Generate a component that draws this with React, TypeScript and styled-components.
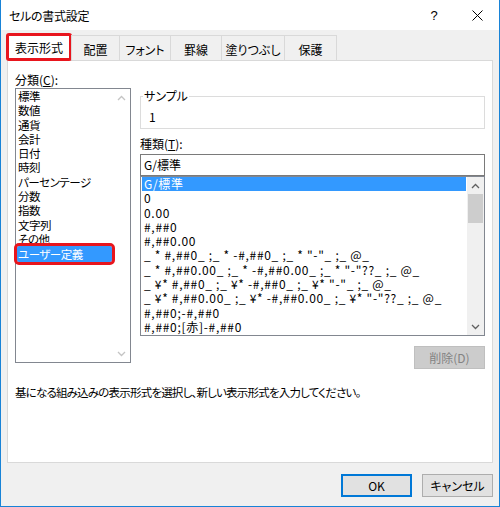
import styled, { createGlobalStyle } from 'styled-components';

const GlobalStyle = createGlobalStyle`
  html, body {
    margin: 0;
    padding: 0;
    background: #ffffff;
  }
  body {
    font-family: "Noto Sans CJK JP", "Noto Sans", sans-serif;
    font-size: 12px;
    color: #000000;
    font-feature-settings: "palt";
  }
`;

// Window frame
const Window = styled.div`
  width: 500px;
  height: 507px;
  box-sizing: border-box;
  border: 1px solid #1883d7;
  border-top: none;
  background: #f0f0f0;
  display: flex;
  flex-direction: column;
`;

const TitleBar = styled.div`
  height: 30px;
  flex: none;
  background: #ffffff;
  display: flex;
  align-items: center;
  padding-left: 8px;
`;

const Title = styled.span`
  font-size: 12px;
  letter-spacing: -0.3px;
  flex: 1;
`;

const CaptionButton = styled.div<{ $w: number }>`
  width: ${(p) => p.$w}px;
  height: 30px;
  display: flex;
  align-items: center;
  justify-content: center;
  font-size: 13px;
  font-family: "Liberation Sans", sans-serif;
`;

const Body = styled.div`
  flex: 1;
  padding: 3px 6px 0;
  display: flex;
  flex-direction: column;
`;

// Tabs
const TabStrip = styled.div`
  height: 28px;
  display: flex;
  position: relative;
  z-index: 1;
  margin-bottom: -1px;
`;

const Tab = styled.div<{ $w: number; $active?: boolean }>`
  width: ${(p) => p.$w}px;
  box-sizing: border-box;
  display: flex;
  align-items: center;
  justify-content: center;
  font-size: 12px;
  ${(p) =>
    p.$active
      ? `
    height: 28px;
    background: #ffffff;
    border: 3px solid #e8151d;
    border-radius: 3px;
    margin-left: -1px;
    padding-top: 1px;
  `
      : `
    height: 25px;
    margin-top: 2px;
    background: #f0f0f0;
    border: 1px solid #d9d9d9;
    border-bottom: none;
    margin-left: -1px;
    padding-top: 3px;
  `}
`;

const Panel = styled.div`
  height: 403px;
  flex: none;
  box-sizing: border-box;
  background: #ffffff;
  border: 1px solid #d9d9d9;
  padding: 11px 7px 0;
`;

const Columns = styled.div`
  display: flex;
  gap: 9px;
`;

const LeftCol = styled.div`
  width: 116px;
  display: flex;
  flex-direction: column;
`;

const RightCol = styled.div`
  flex: 1;
  padding-top: 16px;
  display: flex;
  flex-direction: column;
`;

const FieldLabel = styled.div<{ $gap?: number }>`
  line-height: 16px;
  margin-top: ${(p) => p.$gap ?? 0}px;
`;

// List boxes
const ListBox = styled.div<{ $h: number }>`
  height: ${(p) => p.$h}px;
  box-sizing: border-box;
  border: 1px solid #828790;
  display: flex;
  background: #ffffff;
`;

const ListItems = styled.div`
  flex: 1;
  padding: 0 1px;
  display: flex;
  flex-direction: column;
`;

const CategoryItem = styled.div<{ $selected?: boolean; $marked?: boolean }>`
  height: 14.3px;
  line-height: 14.3px;
  padding-left: 1px;
  font-size: 11.5px;
  letter-spacing: -0.5px;
  white-space: nowrap;
  background: ${(p) => (p.$selected ? '#3399ff' : 'transparent')};
  color: ${(p) => (p.$selected ? '#ffffff' : '#000000')};
  ${(p) =>
    p.$marked
      ? 'height: 16px; line-height: 16px; outline: 3px solid #e8151d; border-radius: 2px; position: relative;'
      : ''}
`;

const FormatItem = styled.div<{ $selected?: boolean }>`
  height: 14.3px;
  line-height: 14.3px;
  padding-left: 2px;
  white-space: pre;
  letter-spacing: 0.7px;
  background: ${(p) => (p.$selected ? '#3399ff' : 'transparent')};
  color: ${(p) => (p.$selected ? '#ffffff' : '#000000')};
`;

const ScrollBar = styled.div<{ $track: string }>`
  width: 17px;
  flex: none;
  background: ${(p) => p.$track};
  display: flex;
  flex-direction: column;
`;

const ArrowBox = styled.div`
  height: 17px;
  display: flex;
  align-items: center;
  justify-content: center;
`;

const Thumb = styled.div`
  height: 29px;
  margin: 0 1px;
  background: #cdcdcd;
`;

const Spacer = styled.div`
  flex: 1;
`;

// Sample group
const Group = styled.fieldset`
  margin: 0;
  padding: 5px 8px 3px;
  border: 1px solid #dcdcdc;
  min-width: 0;
`;

const GroupLegend = styled.legend`
  padding: 0 1px;
  margin-left: -6px;
  line-height: 16px;
  font-size: 12px;
`;

const SampleValue = styled.div`
  line-height: 16px;
`;

const TextBox = styled.div`
  height: 22px;
  box-sizing: border-box;
  margin-top: 2px;
  border: 1px solid #7a7a7a;
  padding: 0 3px;
  line-height: 20px;
`;

const ButtonRow = styled.div<{ $gap: number }>`
  display: flex;
  justify-content: flex-end;
  gap: 10px;
  margin-top: ${(p) => p.$gap}px;
`;

const Button = styled.div<{ $variant?: 'default' | 'disabled' }>`
  width: 71px;
  height: 23px;
  box-sizing: border-box;
  display: flex;
  align-items: center;
  justify-content: center;
  font-size: 12px;
  ${(p) =>
    p.$variant === 'disabled'
      ? 'background: #cccccc; border: 1px solid #bfbfbf; color: #838383;'
      : p.$variant === 'default'
      ? 'background: #e1e1e1; border: 1px solid #0078d7; box-shadow: inset 0 0 0 1px #0078d7; color: #000;'
      : 'background: #e1e1e1; border: 1px solid #adadad; color: #000;'}
`;

const Description = styled.div`
  margin-top: 15px;
  line-height: 16px;
  font-size: 11.5px;
  letter-spacing: -0.8px;
`;

const Chevron = ({ up, color }: { up?: boolean; color: string }) => (
  <svg width="9" height="6" viewBox="0 0 9 6">
    <path
      d={up ? 'M1 5 L4.5 1.5 L8 5' : 'M1 1 L4.5 4.5 L8 1'}
      fill="none"
      stroke={color}
      strokeWidth="1.3"
    />
  </svg>
);

const tabs = [
  { label: '表示形式', w: 66, active: true },
  { label: '配置', w: 49 },
  { label: 'フォント', w: 52 },
  { label: '罫線', w: 52 },
  { label: '塗りつぶし', w: 64 },
  { label: '保護', w: 53 },
];

const categories = [
  '標準',
  '数値',
  '通貨',
  '会計',
  '日付',
  '時刻',
  'パーセンテージ',
  '分数',
  '指数',
  '文字列',
  'その他',
  'ユーザー定義',
];

const formats = [
  'G/標準',
  '0',
  '0.00',
  '#,##0',
  '#,##0.00',
  '_ * #,##0_ ;_ * -#,##0_ ;_ * "-"_ ;_ @_ ',
  '_ * #,##0.00_ ;_ * -#,##0.00_ ;_ * "-"??_ ;_ @_ ',
  '_ ¥* #,##0_ ;_ ¥* -#,##0_ ;_ ¥* "-"_ ;_ @_ ',
  '_ ¥* #,##0.00_ ;_ ¥* -#,##0.00_ ;_ ¥* "-"??_ ;_ @_ ',
  '#,##0;-#,##0',
  '#,##0;[赤]-#,##0',
];

const App = () => {
  return (
    <>
      <GlobalStyle />
      <Window>
        <TitleBar>
          <Title>セルの書式設定</Title>
          <CaptionButton $w={42}>?</CaptionButton>
          <CaptionButton $w={44}>
            <svg width="11" height="11" viewBox="0 0 11 11">
              <path d="M0.5 0.5 L10.5 10.5 M10.5 0.5 L0.5 10.5" stroke="#000" strokeWidth="1" />
            </svg>
          </CaptionButton>
        </TitleBar>

        <Body>
          <TabStrip>
            {tabs.map((t) => (
              <Tab key={t.label} $w={t.w} $active={t.active}>
                {t.label}
              </Tab>
            ))}
          </TabStrip>

          <Panel>
            <Columns>
              <LeftCol>
                <FieldLabel>
                  分類(<u>C</u>):
                </FieldLabel>
                <ListBox $h={275}>
                  <ListItems>
                    {categories.map((c) => (
                      <CategoryItem
                        key={c}
                        $selected={c === 'ユーザー定義'}
                        $marked={c === 'ユーザー定義'}
                      >
                        {c}
                      </CategoryItem>
                    ))}
                  </ListItems>
                  <ScrollBar $track="#ffffff">
                    <ArrowBox>
                      <Chevron up color="#c4c4c4" />
                    </ArrowBox>
                    <Spacer />
                    <ArrowBox>
                      <Chevron color="#c4c4c4" />
                    </ArrowBox>
                  </ScrollBar>
                </ListBox>
              </LeftCol>

              <RightCol>
                <Group>
                  <GroupLegend>サンプル</GroupLegend>
                  <SampleValue>1</SampleValue>
                </Group>

                <FieldLabel $gap={7}>
                  種類(<u>T</u>):
                </FieldLabel>
                <TextBox>G/標準</TextBox>
                <ListBox $h={160}>
                  <ListItems>
                    {formats.map((f, i) => (
                      <FormatItem key={f} $selected={i === 0}>
                        {f}
                      </FormatItem>
                    ))}
                  </ListItems>
                  <ScrollBar $track="#f0f0f0">
                    <ArrowBox>
                      <Chevron up color="#606060" />
                    </ArrowBox>
                    <Thumb />
                    <Spacer />
                    <ArrowBox>
                      <Chevron color="#606060" />
                    </ArrowBox>
                  </ScrollBar>
                </ListBox>

                <ButtonRow $gap={10}>
                  <Button $variant="disabled">削除(D)</Button>
                </ButtonRow>
              </RightCol>
            </Columns>

            <Description>
              基になる組み込みの表示形式を選択し、新しい表示形式を入力してください。
            </Description>
          </Panel>

          <ButtonRow $gap={11}>
            <Button $variant="default">OK</Button>
            <Button>キャンセル</Button>
          </ButtonRow>
        </Body>
      </Window>
    </>
  );
};

export default App;
